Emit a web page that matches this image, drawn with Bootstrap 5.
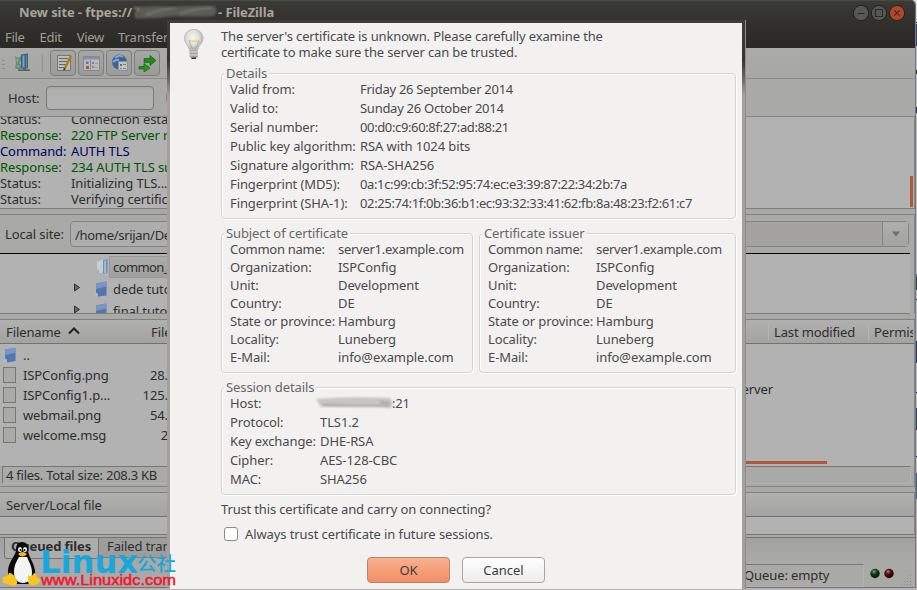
<!DOCTYPE html>
<html lang="en">
<head>
<meta charset="utf-8">
<meta name="viewport" content="width=device-width, initial-scale=1">
<title>FileZilla</title>
<link href="https://cdn.jsdelivr.net/npm/bootstrap@5.3.0/dist/css/bootstrap.min.css" rel="stylesheet">
<style>
html,body{height:100%}
body{width:917px;height:590px;overflow:hidden;font-family:"Noto Sans","Open Sans",sans-serif;font-size:13px;line-height:16px;color:#2e2e2d;letter-spacing:-.1px;white-space:nowrap}
.desk{background:linear-gradient(#dcdcdc 0 22px,#1c2250 22px 23px,#d2d2da 23px 24px,#31476f 24px 46px,#bdbdc6 46px 70px,#333 70px 74px,#bdbdc6 74px 107px,#2b2d50 107px 113px,#bdbdc6 113px 274px,#56719c 274px 277px,#34414f 277px 290px,#bdbdc6 290px 299px,#20204a 299px 300px,#bdbdc6 300px 341px,#28365b 341px 363px,#bdbdc6 363px 392px,#1c2250 392px 393px,#bdbdc6 393px 408px,#2f4068 408px 430px,#bdbdc6 430px 456px,#1c2250 456px 457px,#bdbdc6 457px 473px,#4a6288 473px 499px,#b5b3b8 499px)}
.win{width:916px;height:588px;background:#a9a9a7;border-right:1px solid #787876;border-bottom:1px solid #747472;border-radius:0 5px 0 0;overflow:hidden}
.titlebar{height:24px;background:linear-gradient(#4a4a45 0 1px,#3a3a36 1px,#31302c);padding-left:19px;color:#a9a59b;font-weight:700}
.menubar{height:24px;background:linear-gradient(#31302c,#2a2925);color:#a09e96;padding-left:5px;gap:15px;padding-top:1px}
.menubar span{letter-spacing:-.3px}
.menubar span:last-child{margin-left:-1px;letter-spacing:0}
.toolbar-x{height:31px;border-bottom:1px solid #8c8c8a;background:linear-gradient(#aaaaa8,#a7a7a5);padding-left:2px}
.tool{width:26px;height:26px;border:1px solid #7d7d7a;border-radius:4px;background:linear-gradient(#a6a6a4,#9b9b99);margin-right:2px}
.quick{height:38px;border-bottom:1px solid #858583;padding-left:8px}
.field{background:linear-gradient(#a7a7a7,#b1b1b1 4px);border:1px solid #7a7875;border-radius:4px;height:24px}
.hostf{width:108px;margin-left:7px}.ufield{margin-left:11px;color:#6b3030}
.log{height:92px;background:#b2b2b2;border-bottom:1px solid #7f7f7d;overflow:hidden;border-right:1px solid #868684}
.log .inner{margin-top:-6px}
.log .who{width:71px}
.srv{color:#005500}.cmd{color:#000060}
.thumb{width:3px;height:31px;background:#b1583a;margin-right:1px;margin-bottom:1px}
.gap5{height:5px;background:#a9a9a7}
.gap2{height:2px}
.pane{border-top:1px solid #80807e;border-right:1px solid #868684}
.site{height:38px;padding-left:5px}
.site .combo{width:839px;height:26px;margin-right:5px;background:linear-gradient(90deg,#adadad 0 120px,#a4a3a0 0);border:1px solid #858482;border-radius:4px}
.site .arrow{width:26px;background:linear-gradient(#aeaeac,#a4a4a2);border-left:1px solid #858482}
.path{letter-spacing:-.3px;padding-top:2px}
.tree{height:61px;border-top:1px solid #000;border-bottom:1px solid #7f7f7d;background:#b2b2b2;overflow:hidden}
.tree .item{height:22px;padding-left:73px}
.tree .selrow{padding-top:2px;height:24px}
.tree .selrow+.item,.tree .item:last-child{position:static}
.tree .sel{background:linear-gradient(#acacaa,#9f9f9d);border:1px solid #989896;height:22px;width:100px;line-height:20px;letter-spacing:-.6px;padding-left:3px}
.head{height:24px;border-bottom:1px solid #72726f;background:linear-gradient(#b0b0af,#a3a3a1)}
.h1x{width:151px;padding-left:6px}.h2x{width:617px}.h3x{width:100px;border-left:1px solid #b6b6b4;padding-left:5px;letter-spacing:-.15px}.h4x{width:45px;border-left:1px solid #b6b6b4;padding-left:5px;overflow:hidden}
.files{height:122px;background:#b2b2b2}
.files .item{height:20px}
.flist{width:200px;padding:1px 0 0 3px}.nm{margin-left:7px;width:100px}.item svg+.nm{margin-left:6px}.sz{width:45px;text-align:right}
.doc{width:13px;height:16px;border:1px solid #767674;background:#aaaaa9}
.notc{width:573px;text-align:right;padding-top:37px}
.hbar{width:527px;height:3px;background:#b1583a;margin-left:300px;margin-bottom:2px}
.statbox{border:1px solid #b3b3b1;border-top-color:#777775;border-left-color:#777775}
.statwrap{height:21px;border-bottom:1px solid #858583;padding:0 3px 2px 2px}.total{height:18px;padding-left:3px;line-height:17px;letter-spacing:-.25px}
.queueh{padding-left:6px}.qlist{height:18px;background:#b2b2b2;border-bottom:1px solid #747472}
.tabs{height:25px;background:linear-gradient(#a1a19f,#a9a9a7);border-top:1px solid #737371}
.tab-a{height:21px;line-height:17px;border:1px solid #747472;border-top:0;border-radius:0 0 3px 3px;background:#acacaa;margin-left:4px;width:95px;padding-left:6px}
.tab-b{height:20px;line-height:17px;background:#9d9d9b;border:1px solid #80807e;border-top:0;border-left:0;padding-left:8px;width:140px}
.foot{padding-top:1px}
.qbox{width:185px;height:23px;padding-left:64px;line-height:21px}
.dlg{left:167px;top:20px;width:578px;height:569px;padding:3px 3px 0;background:linear-gradient(#3f3e3a 0,#353430 40px,#6d6c69 60px,#a3a19d 75px,#a3a19d 100%);box-shadow:1px 0 0 #8d8c89}
.dlg .sheet{background:#f2f1f0;height:566px;color:#4a4a4a;padding:5px 7px 0 12px}
.bulb{margin-right:15px}
.intro{height:45px;letter-spacing:-.14px}
.grp{border:1px solid #d6d4d2;border-radius:4px;box-shadow:1px 1px 0 #fff, inset 1px 1px 0 #fff;padding:7px 0 0 8px}
.grp .cap{position:absolute;left:2px;top:-9px;background:#f2f1f0;padding:0 2px 0 2px;color:#666}
.r19>div{height:19px}.r18>div{height:18px}
.k130{width:130px}.k108{width:108px}.k90{width:90px}
.hex{letter-spacing:-.37px}.date{letter-spacing:-.27px}.cn{letter-spacing:-.27px}
.g1{height:146px}.pair{margin-top:14px;gap:6px}.g2{width:252px;height:140px}.g3{width:257px;height:140px}.g4{margin-top:14px;height:108px}
.ask{margin-top:6px;letter-spacing:-.16px}.always{margin-top:9px;padding-left:3px;gap:7px}.btns{margin:15px 0 0 146px;gap:12px}
.dbtn{width:83px;height:26px;border-radius:4px;padding:0;line-height:24px;font-size:13px;border:1px solid #a9a5a1;color:#3c3c3c;background:linear-gradient(#fff,#ececeb)}
.dbtn.ok{background:linear-gradient(#fbb08f,#f28f66);border-color:#b08673}
.chk{width:14px;height:14px;border:1px solid #8d8b88;border-radius:3px;background:#fff}
.mark-w{left:0;top:540px}
</style>
<script src="https://cdn.jsdelivr.net/npm/bootstrap@5.3.0/dist/js/bootstrap.bundle.min.js"></script>
</head>
<body class="desk position-relative">
<div class="win d-flex flex-column">
  <div class="titlebar d-flex align-items-center flex-shrink-0">
    <span>New site - ftpes://</span>
    <svg width="86" height="18" viewBox="0 0 86 18"><defs><filter id="sm"><feGaussianBlur stdDeviation="1"/></filter></defs><g filter="url(#sm)"><path d="M2 5q20-3 38-1 24-2 43-1l2 5-3 5q-18 1-40 0-22 3-40 2l5-5z" fill="#5c5b56"/><path d="M1 5l6 0-4 8M14 12q14-6 30-7M48 11q12-5 32-6" stroke="#7c7a73" stroke-width="1.600" fill="none"/></g></svg>
    <span>- FileZilla</span>
    <svg class="ms-auto me-2" width="54" height="20" viewBox="0 0 54 20">
      <g stroke="#23221f"><circle cx="8" cy="11" r="7.600" fill="#595953"/><circle cx="26" cy="11" r="7.600" fill="#595953"/><circle cx="44" cy="11" r="7.600" fill="#b4462a"/></g>
      <path d="M4.500 11.500h7M22.500 7.500h7v7h-7zM41.300 8.300l5.400 5.400M46.700 8.300l-5.400 5.400" stroke="#2b2a27" stroke-width="1.200" fill="none"/>
    </svg>
  </div>
  <div class="menubar d-flex align-items-center flex-shrink-0"><span>File</span><span>Edit</span><span>View</span><span>Transfer</span></div>
  <div class="toolbar-x d-flex align-items-center flex-shrink-0">
    <svg width="48" height="28" viewBox="0 0 48 28">
      <path d="M-1 11.500h4M-1 15.500h4M-1 19.500h4" stroke="#8c8c8a"/>
      <path d="M13 7l3 2 3-2v5l-2 2 3 3-2 4-5-2 1-5z" fill="#5f8f66"/><path d="M14 9l4 2-3 3zM13 17l4-1 1 3z" fill="#86a58a"/>
      <path d="M19 5.500l7-1v15h-7z" fill="#3f5f7a"/><path d="M20.500 6.500h2v12h-2z" fill="#7ba3bf"/><path d="M24 6h1v13h-1z" fill="#5c86a5"/><path d="M16 20.500h12v1.500H16zM21 19h3v3h-3z" fill="#53606a"/>
      <path d="M40.500 6v17" stroke="#919190"/>
    </svg>
    <span class="tool"><svg class="d-block" width="24" height="24" viewBox="0 0 24 24"><path d="M6.500 4.500h13v15h-13z" fill="#bdbdbd" stroke="#77767a"/><path d="M8 7.500h9M8 10.500h8M8 13.500h7M8 16.500h5" stroke="#66666a"/><path d="M20 5l-5.500 11-1.500 3" stroke="#b07a15" stroke-width="2.400"/><path d="M13 17l-.5 3 2-2z" fill="#222"/></svg></span>
    <span class="tool"><svg class="d-block" width="24" height="24" viewBox="0 0 24 24"><path d="M4.500 5.500h16v14h-16z" fill="#b9bbbd" stroke="#85898d"/><path d="M5 6h15v2.500H5z" fill="#8493a4"/><path d="M11.500 9v10" stroke="#888"/><path d="M7 10.500h2.500V13H7z" fill="#61759a"/><path d="M7 15h3v3H7z" fill="#a8504b"/><path d="M13 11h2v2h-2zM13 15h2v2h-2z" fill="#7a8694"/><path d="M16 12.500h3M16 16.500h3" stroke="#999"/></svg></span>
    <span class="tool"><svg class="d-block" width="24" height="24" viewBox="0 0 24 24"><circle cx="12.500" cy="11" r="7.500" fill="#3c6398"/><path d="M8 7q4-4 8-1M6 11q3-3 6-2" stroke="#8ba9cc" stroke-width="2" fill="none"/><path d="M11.500 10.500h9v9h-9z" fill="#c1c2c4" stroke="#8d8f92"/><path d="M13 13h2v2h-2z" fill="#a4524a"/><path d="M16 13.500h3M13 17.500h2M16 17.500h3" stroke="#72839c"/></svg></span>
    <span class="tool"><svg class="d-block" width="24" height="24" viewBox="0 0 24 24"><path d="M9 7.500h6V4.500l6 5-6 5v-3H9z" fill="#1b8c16" stroke="#14630f" stroke-width=".7"/><path d="M4 15.500h5v-3l6 4.500-6 4v-3H4z" fill="#239a1d" stroke="#14630f" stroke-width=".7"/></svg></span>
  </div>
  <div class="quick d-flex align-items-center flex-shrink-0"><span>Host:</span><span class="field hostf"></span><span class="ufield">U</span></div>
  <div class="log d-flex flex-shrink-0">
    <div class="inner">
      <div class="d-flex"><span class="who">Status:</span><span>Connection established</span></div>
      <div class="d-flex srv"><span class="who">Response:</span><span>220 FTP Server ready</span></div>
      <div class="d-flex cmd"><span class="who">Command:</span><span>AUTH TLS</span></div>
      <div class="d-flex srv"><span class="who">Response:</span><span>234 AUTH TLS successful</span></div>
      <div class="d-flex"><span class="who">Status:</span><span>Initializing TLS...</span></div>
      <div class="d-flex"><span class="who">Status:</span><span>Verifying certificate...</span></div>
    </div>
    <span class="thumb ms-auto align-self-end"></span>
  </div>
  <div class="gap5 flex-shrink-0"></div>
  <div class="pane flex-shrink-0">
    <div class="site d-flex align-items-center"><span>Local site:</span>
      <div class="combo d-flex ms-auto align-items-stretch"><span class="ps-1 align-self-center path">/home/srijan/Desktop</span><span class="arrow ms-auto d-flex align-items-center justify-content-center"><svg width="8" height="6"><path d="M0 .5h8L4 5.500z" fill="#6f6f6d"/></svg></span></div></div>
    <div class="tree me-1">
      <div class="item d-flex align-items-center selrow"><svg width="36" height="18" viewBox="0 0 36 18"><path d="M24 3.500l6-2v13l-6 1z" fill="#c9ccce"/><path d="M30 2.500l4.500-1.500v14L30 16z" fill="#6d92b4"/><path d="M31 3l2-.6V15l-2 .5z" fill="#9db9d2"/><path d="M22 13l4-1v4l-4-.5z" fill="#9db0c0"/></svg><span class="sel">common_files</span></div>
      <div class="item d-flex align-items-center"><svg width="36" height="18" viewBox="0 0 36 18"><path d="M1.500 4v7l5-3.500z" fill="#666" stroke="#333"/><path d="M23 3.500l10.500-2v14l-8.500 1-2-3z" fill="#5277ae"/><path d="M23 3.500l10.500-2v5L23 9z" fill="#7896c3"/><path d="M22 12l3 2v2.500l-3-1z" fill="#a9bccf"/></svg><span class="ps-1">dede tutorial</span></div>
      <div class="item d-flex align-items-center"><svg width="36" height="18" viewBox="0 0 36 18"><path d="M1.500 4v7l5-3.500z" fill="#666" stroke="#333"/><path d="M23 3.500l10.500-2v14l-8.500 1-2-3z" fill="#5277ae"/><path d="M23 3.500l10.500-2v5L23 9z" fill="#7896c3"/></svg><span class="ps-1">final tutorial</span></div>
    </div>
  </div>
  <div class="gap5 flex-shrink-0"></div>
  <div class="pane flex-shrink-0">
    <div class="head d-flex align-items-center">
      <span class="h1x">Filename <svg class="ms-1 mb-1" width="12" height="8"><path d="M1 6.500L6 1.500l5 5" fill="none" stroke="#222" stroke-width="2"/></svg></span><span class="h2x">Filesize</span>
      <span class="h3x">Last modified</span><span class="h4x">Permissions</span>
    </div>
    <div class="files d-flex flex-column">
      <div class="d-flex">
        <div class="flist">
          <div class="item d-flex align-items-center"><svg width="14" height="16" viewBox="0 0 14 16"><path d="M2 2.500l10.500-1.500v13l-8.500 1.500-2-2z" fill="#5277ae"/><path d="M2 2.500l10.500-1.500v5L2 8z" fill="#7896c3"/><path d="M1 11l3 1.500v3l-3-1z" fill="#a9bccf"/></svg><span class="nm">..</span></div>
          <div class="item d-flex align-items-center"><i class="doc"></i><span class="nm">ISPConfig.png</span><span class="sz">28.</span></div>
          <div class="item d-flex align-items-center"><i class="doc"></i><span class="nm">ISPConfig1.p...</span><span class="sz">125.</span></div>
          <div class="item d-flex align-items-center"><i class="doc"></i><span class="nm">webmail.png</span><span class="sz">54.</span></div>
          <div class="item d-flex align-items-center"><i class="doc"></i><span class="nm">welcome.msg</span><span class="sz">2</span></div>
        </div>
        <span class="notc">Not connected to any server</span>
      </div>
      <i class="hbar mt-auto"></i>
    </div>
    <div class="statwrap"><div class="statbox total">4 files. Total size: 208.3 KB</div></div>
  </div>
  <div class="gap5 flex-shrink-0"></div>
  <div class="pane flex-shrink-0"><div class="head d-flex align-items-center queueh">Server/Local file</div><div class="qlist"></div></div>
  <div class="gap2 flex-shrink-0"></div>
  <div class="tabs d-flex flex-shrink-0"><span class="tab-a fw-bold">Queued files</span><span class="tab-b">Failed transfers</span></div>
  <div class="foot d-flex align-items-center flex-grow-1">
    <div class="statbox qbox ms-auto">Queue: empty</div>
    <svg width="51" height="24" viewBox="0 0 51 24"><defs><radialGradient id="lg" cx=".4" cy=".3"><stop offset="0" stop-color="#8fa08f"/><stop offset=".5" stop-color="#1d4a1d"/><stop offset="1" stop-color="#0a240a"/></radialGradient><radialGradient id="lr" cx=".4" cy=".3"><stop offset="0" stop-color="#a98a8a"/><stop offset=".5" stop-color="#5c1216"/><stop offset="1" stop-color="#2c0507"/></radialGradient></defs><circle cx="11" cy="10.500" r="4.700" fill="url(#lg)"/><circle cx="25" cy="10.500" r="4.700" fill="url(#lr)"/><g fill="#8a8a88"><path d="M46 12h1v1h-1zM43 15h1v1h-1zM46 15h1v1h-1zM40 18h1v1h-1zM43 18h1v1h-1zM46 18h1v1h-1zM37 21h1v1h-1zM40 21h1v1h-1zM43 21h1v1h-1zM46 21h1v1h-1z"/></g></svg>
  </div>
</div>

<div class="dlg position-absolute">
  <div class="sheet d-flex">
    <svg class="bulb flex-shrink-0" width="24" height="34" viewBox="0 1 24 34"><defs><radialGradient id="b" cx=".45" cy=".4"><stop offset="0" stop-color="#f6f6ee"/><stop offset=".7" stop-color="#dededa"/><stop offset="1" stop-color="#b9b9b6"/></radialGradient></defs><path d="M12 2.500C6 2.500 2.500 6.500 2.500 11.500c0 5 4.500 7 5 12h8c.5-5 5.500-7 5.500-12 0-5-3.500-9-9-9z" fill="url(#b)" stroke="#bdbdba"/><path d="M7 13.500q5 1.500 10 0" stroke="#e7db73" stroke-width="1.600" fill="none"/><path d="M7 13.500l3.500 9M17 13.500l-3.500 9" stroke="#aaa" fill="none"/><path d="M7.500 23.500h8.500v6l-2 2H9.500l-2-2z" fill="#a5a5a2"/><path d="M7.500 25h8.500M7.500 28h8.500" stroke="#dcdcda"/><path d="M9.500 30.500h4.500v1.500H9.500z" fill="#333"/></svg>
    <div class="flex-grow-1">
      <div class="intro">The server's certificate is unknown. Please carefully examine the<br>certificate to make sure the server can be trusted.</div>
      <div class="grp g1 position-relative r19"><span class="cap">Details</span>
        <div class="d-flex"><span class="k130">Valid from:</span><span class="date">Friday 26 September 2014</span></div>
        <div class="d-flex"><span class="k130">Valid to:</span><span class="date">Sunday 26 October 2014</span></div>
        <div class="d-flex"><span class="k130">Serial number:</span><span class="hex">00:d0:c9:60:8f:27:ad:88:21</span></div>
        <div class="d-flex"><span class="k130">Public key algorithm:</span><span>RSA with 1024 bits</span></div>
        <div class="d-flex"><span class="k130">Signature algorithm:</span><span>RSA-SHA256</span></div>
        <div class="d-flex"><span class="k130">Fingerprint (MD5):</span><span class="hex">0a:1c:99:cb:3f:52:95:74:ec:e3:39:87:22:34:2b:7a</span></div>
        <div class="d-flex"><span class="k130">Fingerprint (SHA-1):</span><span class="hex">02:25:74:1f:0b:36:b1:ec:93:32:33:41:62:fb:8a:48:23:f2:61:c7</span></div>
      </div>
      <div class="d-flex pair">
        <div class="grp g2 position-relative r18"><span class="cap">Subject of certificate</span>
          <div class="d-flex"><span class="k108 cn">Common name:</span><span class="cn">server1.example.com</span></div>
          <div class="d-flex"><span class="k108">Organization:</span><span>ISPConfig</span></div>
          <div class="d-flex"><span class="k108">Unit:</span><span>Development</span></div>
          <div class="d-flex"><span class="k108">Country:</span><span>DE</span></div>
          <div class="d-flex"><span class="k108">State or province:</span><span>Hamburg</span></div>
          <div class="d-flex"><span class="k108">Locality:</span><span>Luneberg</span></div>
          <div class="d-flex"><span class="k108">E-Mail:</span><span>info@example.com</span></div>
        </div>
        <div class="grp g3 position-relative r18"><span class="cap">Certificate issuer</span>
          <div class="d-flex"><span class="k108 cn">Common name:</span><span class="cn">server1.example.com</span></div>
          <div class="d-flex"><span class="k108">Organization:</span><span>ISPConfig</span></div>
          <div class="d-flex"><span class="k108">Unit:</span><span>Development</span></div>
          <div class="d-flex"><span class="k108">Country:</span><span>DE</span></div>
          <div class="d-flex"><span class="k108">State or province:</span><span>Hamburg</span></div>
          <div class="d-flex"><span class="k108">Locality:</span><span>Luneberg</span></div>
          <div class="d-flex"><span class="k108">E-Mail:</span><span>info@example.com</span></div>
        </div>
      </div>
      <div class="grp g4 position-relative r19"><span class="cap">Session details</span>
        <div class="d-flex"><span class="k90">Host:</span><svg width="72" height="18" viewBox="0 0 72 18" overflow="visible"><g filter="url(#sm)"><path d="M-4 4q30-3 74-1l3 5-2 5-20-2q-20 1-50 1z" fill="#c6c5c4"/><path d="M3 10q30 1 66 1M60 7l10 1" stroke="#9b9a99" stroke-width="1.600" fill="none"/></g></svg><span class="date">:21</span></div>
        <div class="d-flex"><span class="k90">Protocol:</span><span>TLS1.2</span></div>
        <div class="d-flex"><span class="k90">Key exchange:</span><span>DHE-RSA</span></div>
        <div class="d-flex"><span class="k90">Cipher:</span><span>AES-128-CBC</span></div>
        <div class="d-flex"><span class="k90">MAC:</span><span>SHA256</span></div>
      </div>
      <div class="ask">Trust this certificate and carry on connecting?</div>
      <div class="d-flex align-items-center always"><i class="chk"></i><span>Always trust certificate in future sessions.</span></div>
      <div class="d-flex btns"><button class="btn dbtn ok">OK</button><button class="btn dbtn">Cancel</button></div>
    </div>
  </div>
</div>

<svg class="mark-w position-absolute" width="180" height="50" viewBox="0 0 180 50">
  <path d="M22 2c-5 0-6 4-6 8 0 5-7 11-8 20-.5 6 2 13 8 14h12c6-1 8-7 7-13-1-9-7-15-7-21 0-5-1-8-6-8z" fill="#0b0b0b"/>
  <path d="M19 17c-3 5-5 9-5 16 0 6 4 10 9 10s9-4 9-10c0-7-3-11-5-16z" fill="#f4f4f4"/>
  <ellipse cx="20" cy="9.500" rx="2" ry="2.600" fill="#fff"/><ellipse cx="25" cy="9.500" rx="2" ry="2.600" fill="#fff"/><circle cx="20.500" cy="10" r="1"/><circle cx="24.500" cy="10" r="1"/>
  <path d="M18 14q4.500-4 9 0-4.500 5-9 0z" fill="#f6b81d"/>
  <path d="M3 37q5 0 6-4 4-1 8 8 1 5-4 5-5-2-10-3-1-3 0-6zM28 35q4 3 6-2 2 0 3 4l4 3q-1 3-6 5-6 1-7-3z" fill="#f8c623"/>
  <text x="40" y="33" textLength="98" lengthAdjust="spacingAndGlyphs" font-family="DejaVu Sans, sans-serif" font-weight="700" font-size="32" letter-spacing="0" fill="#18a7dc">Linux</text>
  <text x="137" y="31" textLength="39" lengthAdjust="spacingAndGlyphs" font-family="Noto Sans CJK SC, sans-serif" font-size="19" font-weight="500" letter-spacing="0" fill="#18a7dc">公社</text>
  <text x="41" y="45" textLength="135" lengthAdjust="spacingAndGlyphs" font-family="Liberation Sans, sans-serif" font-size="15" stroke="#f3152f" stroke-width=".5" letter-spacing="0" fill="#f3152f">www.Linuxidc.com</text>
</svg>
</body>
</html>
